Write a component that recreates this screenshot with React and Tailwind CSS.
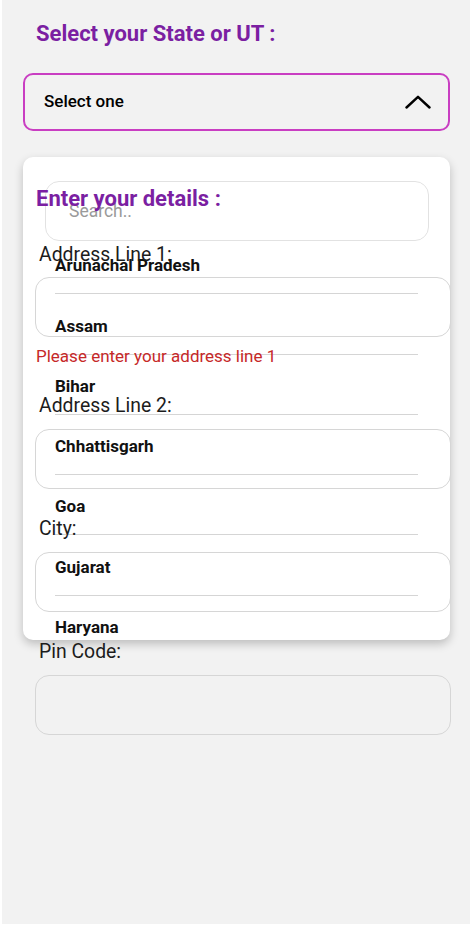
import React from "react";

const states = [
  "Arunachal Pradesh",
  "Assam",
  "Bihar",
  "Chhattisgarh",
  "Goa",
  "Gujarat",
  "Haryana",
  "Himachal Pradesh",
];

function ChevronUp() {
  return (
    <svg width="26" height="14" viewBox="0 0 26 14" fill="none">
      <path d="M1.5 12.5 L13 1.8 L24.5 12.5" stroke="#000" strokeWidth="2.4" strokeLinecap="round" strokeLinejoin="round" />
    </svg>
  );
}

function Field({ label, first, error }) {
  return (
    <div>
      <label className={`block pl-[4px] text-[19.4px] leading-6 text-[#1c1c1c] ${first ? "mt-[30px]" : "mt-[28px]"}`}>
        {label}
      </label>
      <input
        type="text"
        className={`block h-[60px] w-full rounded-[14px] border border-[#d6d6d6] bg-transparent outline-none ${first ? "mt-[10px]" : "mt-[11px]"}`}
      />
      {error && (
        <p className="mt-[9px] pl-[1px] text-[17px] leading-5 text-[#c62828]">{error}</p>
      )}
    </div>
  );
}

export default function App() {
  return (
    <div className="min-h-[927px] bg-white pl-[2px] pr-[4px] pb-[3px] font-['Roboto','Liberation_Sans',sans-serif]">
      <div className="h-[924px] bg-[#f2f2f2] pt-[20px] pl-[21px] pr-[20px]">
        {/* State picker */}
        <h2 className="pl-[13px] text-[22px] leading-7 font-bold text-[#7b1fa2]">Select your State or UT :</h2>

        <div className="relative mt-[25px]">
          <div className="flex h-[58px] items-center justify-between rounded-[10px] border-2 border-[#c93ec2] pl-[19px] pr-[17px]">
            <span className="text-[17px] font-medium text-black">Select one</span>
            <ChevronUp />
          </div>

          {/* Open dropdown */}
          <div className="absolute left-0 right-0 top-[84px] h-[483px] overflow-hidden rounded-[10px] bg-white pt-[24px] shadow-[0_4px_10px_rgba(0,0,0,0.22)]">
            <input
              type="text"
              placeholder="Search.."
              className="mx-[22px] block h-[60px] w-[384px] rounded-[14px] border border-[#e2e2e2] pl-[23px] text-[17.5px] outline-none placeholder:text-[#9a9a9a]"
            />
            <ul className="-mt-[7px]">
              {states.map((s) => (
                <li key={s} className="px-[32px] pt-[19.3px]">
                  <div className="border-b border-[#d5d5d5] pb-[16px] text-[17px] leading-6 font-bold text-[#111]">{s}</div>
                </li>
              ))}
            </ul>
          </div>
        </div>

        {/* Details form */}
        <form className="relative z-10 mt-[54px] mr-[-1px] pl-[12px]">
          <h2 className="pl-[1px] text-[22px] leading-7 font-bold text-[#7b1fa2]">Enter your details :</h2>
          <Field label="Address Line 1:" first error="Please enter your address line 1" />
          <Field label="Address Line 2:" />
          <Field label="City:" />
          <Field label="Pin Code:" />
        </form>
      </div>
    </div>
  );
}
